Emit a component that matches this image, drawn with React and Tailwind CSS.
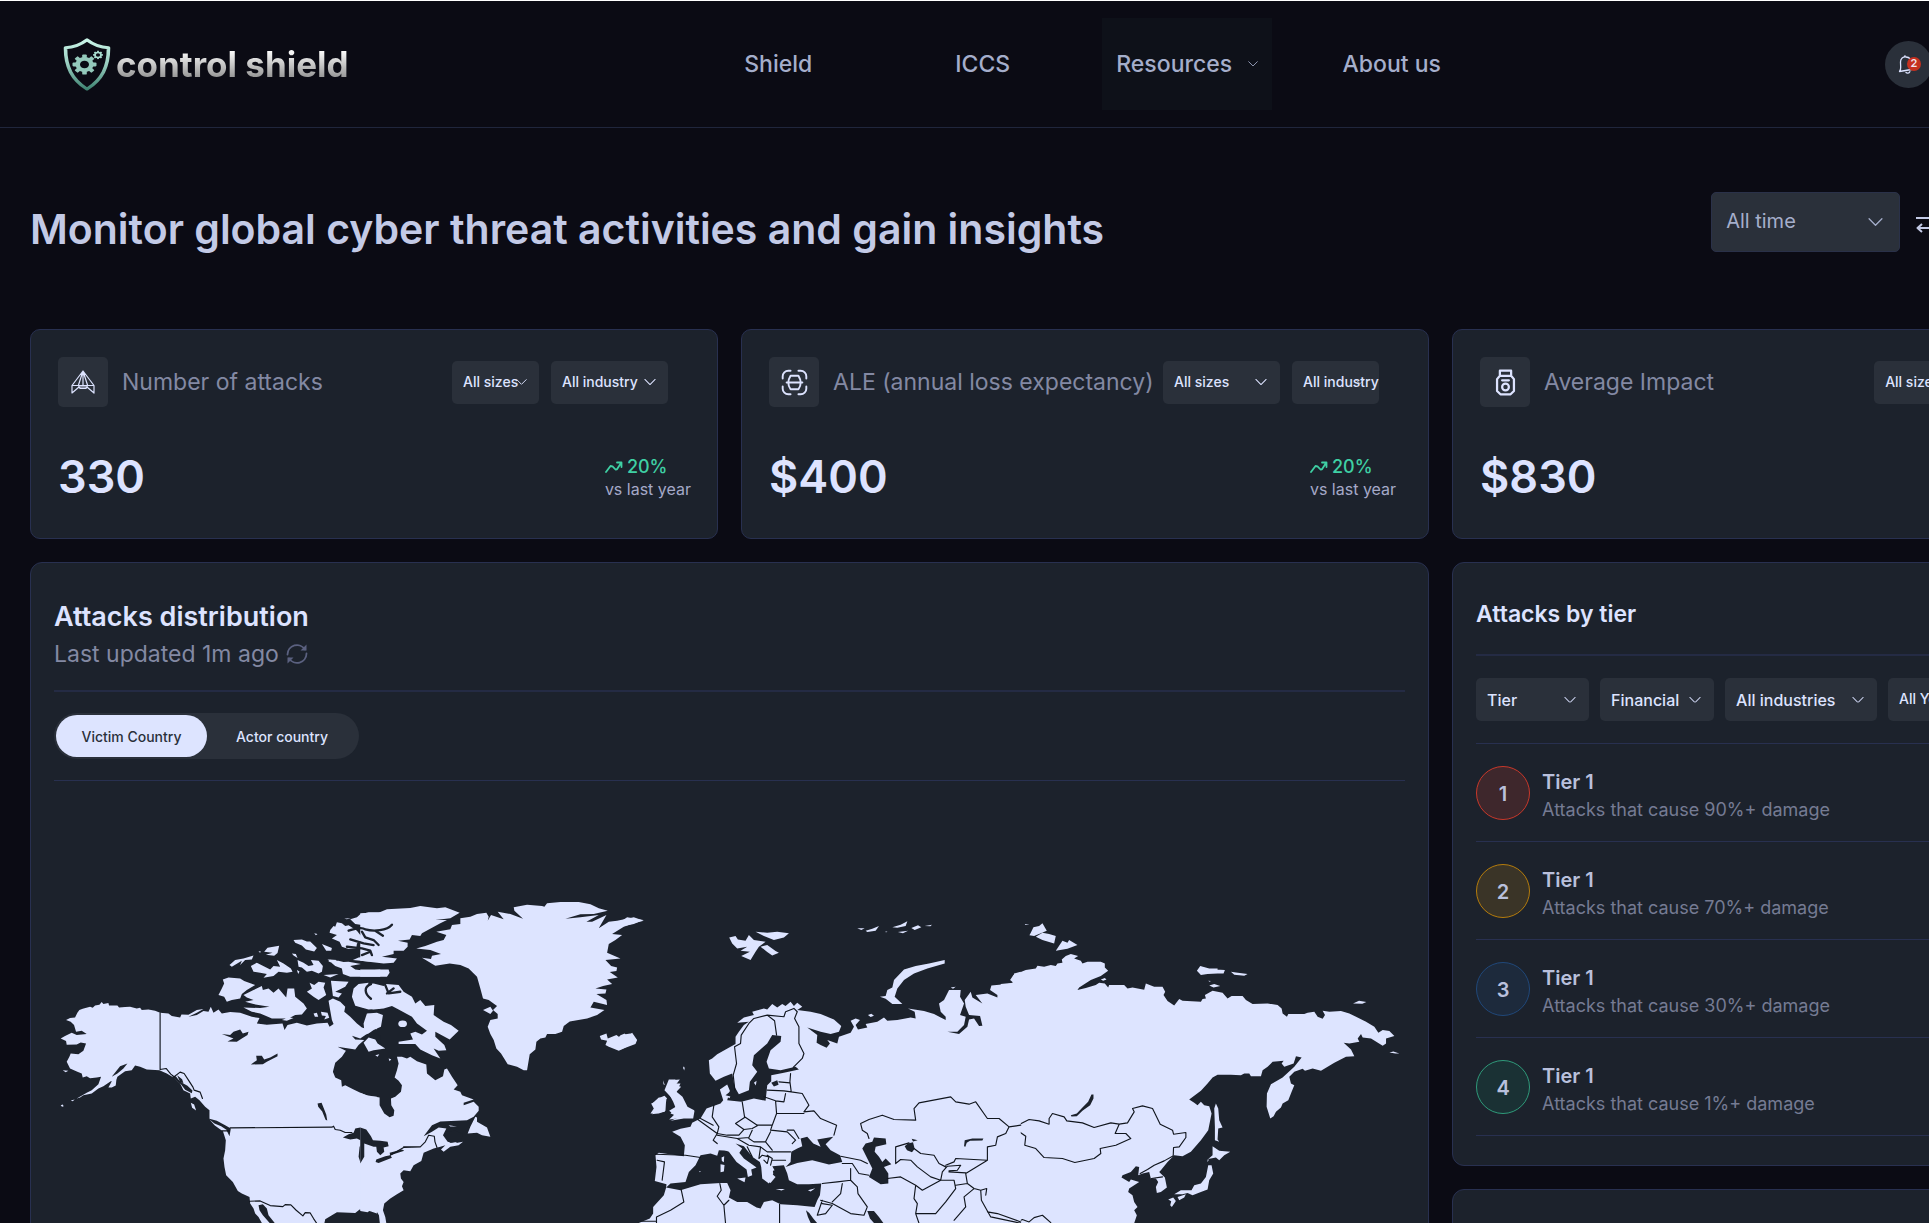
import React from "react";

const Chevron = ({ className }) => (
  <svg viewBox="0 0 14 8" fill="none" stroke="currentColor" strokeWidth="1.2" className={className} aria-hidden="true">
    <path d="M1 1l6 6 6-6" strokeLinecap="round" strokeLinejoin="round" />
  </svg>
);

function Dropdown({ label, options, className = "", selectClass = "", chevronClass = "right-[11px] w-3" }) {
  return (
    <div className={`relative shrink-0 ${className}`}>
      <select
        aria-label={label}
        className={`block w-full appearance-none whitespace-nowrap rounded-[5px] bg-[#2a303a] outline-none ${selectClass}`}
      >
        {options.map((o) => (
          <option key={o}>{o}</option>
        ))}
      </select>
      <Chevron className={`pointer-events-none absolute top-1/2 -translate-y-1/2 ${chevronClass}`} />
    </div>
  );
}

const gearTeeth = [0, 45, 90, 135, 180, 225, 270, 315];

function Logo() {
  return (
    <a href="#home" className="flex items-center gap-1" aria-label="control shield">
      <svg viewBox="0 0 50 66" className="h-[55px] w-[50px]" preserveAspectRatio="none" aria-hidden="true">
        <defs>
          <linearGradient id="mint" x1="0" y1="0" x2="0" y2="1">
            <stop offset="0" stopColor="#c9f5e8" />
            <stop offset="0.5" stopColor="#98cdbf" />
            <stop offset="1" stopColor="#3f8472" />
          </linearGradient>
        </defs>
        <path
          d="M25 3.5C19 9 11 12.500 3.500 13C3.500 36 10 51 25 62.500C40 51 46.500 36 46.500 13C39 12.500 31 9 25 3.500Z"
          fill="none" stroke="url(#mint)" strokeWidth="3.600" strokeLinejoin="round"
        />
        <g transform="translate(22.500 33)">
          {gearTeeth.map((a) => (
            <rect key={a} x="-2.300" y="-12" width="4.600" height="5" rx="1" fill="#94c9bb" transform={`rotate(${a})`} />
          ))}
          <circle r="6.800" fill="none" stroke="#94c9bb" strokeWidth="4.600" />
        </g>
        <g transform="translate(36 21.500)">
          {gearTeeth.map((a) => (
            <rect key={a} x="-0.900" y="-5" width="1.800" height="2" fill="#a9dccf" transform={`rotate(${a})`} />
          ))}
          <circle r="3" fill="none" stroke="#a9dccf" strokeWidth="1.800" />
        </g>
      </svg>
      <span className="bg-gradient-to-b from-white from-20% to-[#8d8d8d] to-85% bg-clip-text text-[35px] leading-[46px] font-bold text-transparent">
        control shield
      </span>
    </a>
  );
}

function Header() {
  return (
    <header className="grid h-[128px] shrink-0 grid-cols-[614px_818px_auto] items-center border-t border-b border-t-white border-b-[#20263c] pl-[62px] text-[23px] text-[#a5aecb]">
      <Logo />
      <nav className="grid grid-cols-4 items-center justify-items-center font-medium">
        <a href="#shield">Shield</a>
        <a href="#iccs">ICCS</a>
        <button type="button" className="flex h-[92px] w-[170px] items-center justify-between bg-[#0e1119] px-[14px]">
          Resources
          <Chevron className="w-[10px]" />
        </button>
        <a href="#about">About us</a>
      </nav>
      <button
        type="button"
        aria-label="Notifications"
        className="relative ml-[391px] flex size-[47px] items-center justify-center rounded-full bg-[#2a303a]"
      >
        <svg viewBox="0 0 20 20" className="mr-1 size-5" fill="none" stroke="#dde3ff" strokeWidth="1.300" strokeLinecap="round" strokeLinejoin="round">
          <path d="M2.500 17.500c1-1 1.300-2 1.200-4.500L3.500 8C3.500 4.500 6 2.700 9 3c3.500.3 5.500 2.500 6 6l.5 3.500 2 2.500zM7.500 2.800L8 1.800M9 18.500c1 1 3 .8 3.800-.8" />
        </svg>
        <span className="absolute top-4 left-[22px] flex size-[14px] items-center justify-center rounded-full bg-[#c5301f] text-[11px] leading-none font-semibold text-[#f0e4ee]">
          2
        </span>
      </button>
    </header>
  );
}

const iconProps = { viewBox: "0 0 24 24", fill: "none", stroke: "#dde3ff", strokeLinejoin: "round", strokeLinecap: "round" };

const PlaneIcon = () => (
  <svg {...iconProps} strokeWidth="1.200" className="size-6">
    <path d="M12 1L1 15.500V23L8 17h8l7 6V15.500L12 1zM12 1v14.500M12 1L7.500 15M12 1l4.500 14M1 15.500h22M7.500 15.500L9 18.500h6l1.500-3" />
  </svg>
);
const ScanIcon = () => (
  <svg {...iconProps} strokeWidth="1.700" className="size-[27px]">
    <path d="M1.500 8.500V6.500a5 5 0 015-5h2M15.500 1.500h2a5 5 0 015 5v2M22.500 15.500v2a5 5 0 01-5 5h-2M8.500 22.500h-2a5 5 0 01-5-5v-2M8.500 6h7c1.500 2.500 2 4 2 6s-.5 4-2 6h-7c-1.500-2-2-4-2-6s.5-3.500 2-6zM5 12h14" />
  </svg>
);
const JarIcon = () => (
  <svg {...iconProps} strokeWidth="2" className="size-[27px]">
    <path d="M7 1.500h10V6H7zM7 6L4.500 9v10.500L7.500 22.500h9l3-3V9L17 6M9 10h6" />
    <circle cx="12" cy="16" r="3" />
  </svg>
);

const stats = [
  { title: "Number of attacks", value: "330", Icon: PlaneIcon, sizes: "w-[87px]", industry: "w-[117px]", chevS: "right-[12px] w-[11px]", chevI: "right-[12px] w-3", trend: "pr-[26px]", change: "20%" },
  { title: "ALE (annual loss expectancy)", value: "$400", Icon: ScanIcon, sizes: "w-[117px]", industry: "w-[87px]", chevS: "right-[13px] w-3", chevI: "right-[15px] w-2", trend: "pr-8", change: "20%" },
  { title: "Average Impact", value: "$830", Icon: JarIcon, sizes: "w-[87px]", industry: "w-[117px]", chevS: "right-[12px] w-[11px]", chevI: "right-[12px] w-3", trend: "pr-8" },
];

const smallSelect = "h-[43px] pl-[11px] pb-[2px] text-[14px] font-medium text-[#dde3ff]";

function StatCard({ title, value, Icon, sizes, industry, chevS, chevI, trend, change }) {
  return (
    <section className="h-[210px] rounded-[10px] border border-[#283050] bg-[#1c222c] pt-[27px] pl-[27px]">
      <div className="flex items-center pr-[49px]">
        <span className="flex size-[50px] shrink-0 items-center justify-center rounded-[5px] bg-[#2a303a]">
          <Icon />
        </span>
        <h2 className="ml-[14px] text-[23px] whitespace-nowrap text-[#8389a3]">{title}</h2>
        <div className="ml-auto flex gap-3 text-[#dde3ff]">
          <Dropdown label={`${title} by size`} options={["All sizes", "Small", "Large"]} className={sizes} selectClass={smallSelect} chevronClass={chevS} />
          <Dropdown label={`${title} by industry`} options={["All industry", "Finance", "Health"]} className={industry} selectClass={smallSelect} chevronClass={chevI} />
        </div>
      </div>
      <div className={`mt-[42px] flex items-center justify-between ${trend}`}>
        <p className="text-[45px] leading-[56px] font-semibold text-[#dde3ff]">{value}</p>
        {change && (
          <div className="pt-px">
            <p className="flex items-center gap-1 text-[18px] leading-[22px] font-medium text-[#3fd0a4]">
              <svg viewBox="0 0 18 14" className="h-[14px] w-[18px]" fill="none" stroke="currentColor" strokeWidth="1.800" strokeLinecap="round" strokeLinejoin="round" aria-hidden="true">
                <path d="M1 12l4.500-6 2 .3 3 3.200 1.500-.2L16 3M12 2.500h4.500V7" />
              </svg>
              {change}
            </p>
            <p className="text-[16px] leading-[22px] text-[#a5a9c8]">vs last year</p>
          </div>
        )}
      </div>
    </section>
  );
}

/* Land, water and border outlines, one set per tile of the map. */
const westLand =
  "M78 420L90 414 105 412 112 398 118 390 128 386 150 380 158 383 165 376 178 374 185 366 190 372 205 369 207 376 232 376 237 382 255 381 270 380 290 385 300 383 305 390 325 388 345 392 360 398 385 400 395 408 420 412 424 403 445 404 470 390 490 387 470 398 445 410 470 405 490 393 505 395 512 380 520 398 535 388 545 400 570 396 600 398 635 410 658 414 650 430 680 434 727 430 733 450 742 435 770 428 800 436 830 430 862 428 868 440 880 432 875 420 868 380 865 362 878 355 900 365 915 380 912 395 930 410 950 430 965 442 985 448 975 465 960 475 935 467 945 478 972 480 955 495 945 508 892 500 917 512 905 530 885 548 878 575 885 592 903 600 905 620 915 615 940 628 965 640 985 648 1010 650L1010 1000 990 993 975 990 958 988 945 998 910 997 890 996 875 1005 855 1017 850 1040 690 1050 665 1028 655 1010 645 1000 640 985 630 970 628 950 605 940 593 932 578 905 558 885 553 860 550 835 555 810 557 780 548 752 560 752 568 768 572 745 555 735 530 722 508 716 508 690 495 680 478 660 465 650 452 655 450 640 430 630 420 610 400 592 380 580 358 570 320 568 300 560 285 556 275 570 255 573 232 590 228 602 212 603 190 618 175 625 155 640 130 645 120 652 110 655 140 638 155 630 175 612 183 590 170 592 150 594 140 588 128 592 125 580 112 575 90 565 80 545 88 530 92 520 115 522 130 512 138 490 122 487 110 493 80 494 78 483 62 475 75 468 95 458 110 465 140 462 125 452 108 455 102 435 92 425Z";
const westIslands =
  "M68 570l17 2-8 4zM205 622l12-22 12-2-2 18-12 6zM62 675l6-2 3 5-5 2zM92 661l12-3-6 5zM452 668l10 5 6 18-12-8zM508 718l15 12 20 8 18 12-12 4-25-18zM870 150L880 138 885 140 890 127 905 130 915 138 925 136 950 152 960 165 975 178 965 180 950 190 948 205 925 207 905 200 898 185 875 175 890 165 868 158ZM930 118L950 112 960 103 985 97 1020 97 1020 148 985 145 965 135 945 132ZM912 116l20-2-12 4zM972 155L1000 160 1020 180 1020 242 985 244 938 240 955 232 990 228 985 218 965 210 1005 198 980 185ZM862 238L885 240 910 246 925 245 962 252 930 258 945 268 975 272 1020 268 1020 290 930 290 908 282 905 265 885 258ZM548 298L565 292 600 295 612 303 645 315 620 330 605 342 600 355 575 360 560 365 552 350 535 345 545 325 552 310ZM610 345L640 330 665 318 668 330 685 325 700 338 715 325 738 352 742 325 762 325 765 350 790 370 800 385 785 403 765 405 745 415 695 415 660 400 635 395 610 382 660 384 688 380 655 375 640 372 615 365 640 360 620 352ZM568 255L585 240 610 235 640 226 635 238 615 240 600 255 605 242 575 260ZM632 258L650 248 690 268 700 258 720 260 710 240 730 250 752 265 757 275 740 278 715 275 700 288 670 293 680 282 660 278 640 275ZM672 215l10-12 35-6-5 22-10 8-25-3 20-6zM760 180l25-2 15 6 10 0 20 20-8 10-25-6-12-12-20-8zM845 192l30 12-2 8-15 0zM822 160l10 2-5 4zM655 213l8 2-4 3zM755 220l12 2 5 12-12-8zM772 240L790 248 805 258 820 255 812 240 835 242 848 258 845 275 835 280 815 272 800 275 785 262 775 260ZM770 270l8 4-4 8zM868 238l22 2-15 8-10-4zM808 308L822 315 835 305 855 308 850 322 858 345 835 360 820 350 800 335 815 325ZM872 302L925 305 915 320 885 335 905 340 895 352 878 348ZM935 350L940 325 955 312 985 308 978 325 980 345 990 355 1020 362 1020 385 985 388 945 377ZM842 395l20 3 5 15-15 5 5-10-12-2zM878 395l12 4 2 18-8 4zM725 420l20-8 15 2-20 8zM850 285l45-3-25 10zM820 400l10-2 4 12-10 0zM985 400l20 10 15-5 0 15-15 8 5 20-20-15z";
const westWater =
  "M545 462L570 465 580 455 600 448 608 460 625 455 622 465 605 475 590 485 562 484 580 475zM632 553L650 540 648 527 665 527 672 538 690 532 712 520 712 528 680 545 668 552zM832 670l12-2 6 15 8 20 3 18-5-2-10-25-12-14zM908 772L925 762 940 758 945 745 960 742 975 745 985 755 990 775 1020 785 1020 800 1005 792 985 795 972 800 972 838 960 845 955 830 958 800 970 785 950 775 930 778zM655 975L668 972 680 985 685 1005 705 1030 690 1030 668 1005 658 990zM395 590l12-2 12 15-8-18 15 12 4 12-10-4 22 12 15 14-2 8-20-10-12-16zM215 590L240 558 262 550 250 565 232 580zM985 448l35 20 0 25-18-15-12-8-15-12zM1005 830l15-10 0 30-14-4z";
const westBorders =
  "M360 398V568M360 568L378 565 392 582 402 590 420 576 432 580 445 600 458 620 462 630 480 636 487 655M570 743L875 741 880 738 885 748 900 750 915 757 935 757M545 752H568M628 963L660 962 690 976 728 979 735 973 752 974 768 990 788 1007 795 997 810 998 820 1015 830 1030";

const atlanticLand =
  "M0 638L20 645 58 652 58 675 72 700 88 711 100 707 102 690 93 675 92 655 105 650 122 635 125 615 115 602 103 592 110 570 115 550 110 530 125 530 140 535 150 530 170 543 198 553 200 580 225 600 248 588 252 568 260 565 275 590 292 615 280 628 300 635 305 645 340 658 310 668 310 675 340 665 355 680 355 692 340 710 320 720 240 724 215 735 190 768 215 755 235 742 258 745 248 765 262 785 280 790 308 785 295 795 270 800 250 815 242 808 255 795 240 800 220 805 190 818 183 842 160 855 150 873 130 870 120 880 122 895 130 905 125 918 130 930 110 942 90 955 72 970 68 990 75 1010 80 1040 60 1040 56 1005 50 995 30 990 22 996 0 992Z";
const greenland =
  "M168 205L195 198 230 185 250 180 258 165 228 155 270 148 275 135 300 132 300 115 330 110 350 102 378 98 385 110 382 122 392 105 430 118 412 95 450 102 488 116 462 92 460 82 500 74 545 78 552 80 560 70 600 66 655 66 690 73 715 85 742 92 700 102 660 103 615 116 660 112 715 105 678 125 695 125 738 105 715 145 745 125 770 122 820 112 850 122 820 130 790 140 755 162 785 165 765 180 745 192 740 218 780 235 735 240 752 258 770 262 768 273 748 276 772 292 740 298 755 312 728 318 705 325 738 328 735 340 708 342 738 360 740 375 700 365 690 382 732 390 710 405 680 415 628 424 610 438 605 455 585 462 560 462 555 472 540 475 528 485 525 508 508 522 500 570 490 570 470 560 442 552 422 520 408 505 400 480 390 462 382 440 390 420 412 415 412 402 398 390 410 378 385 360 368 355 360 325 350 290 325 265 300 255 268 250 225 257 205 245 185 233 212 237 215 227 242 222 210 210Z";
const atlanticIslands =
  "M0 100L30 98 55 98 80 88 150 84 180 78 230 85 255 82 298 98 270 115 225 120 260 120 240 130 185 160 180 168 155 165 148 178 113 182 142 188 142 200 130 212 100 212 100 222 65 230 110 235 100 248 70 250 0 242ZM0 268L85 268 88 278 80 290 0 290ZM0 315L40 310 70 318 78 312 115 315 130 335 155 350 165 370 180 360 195 378 222 375 220 405 250 425 272 435 295 452 268 478 225 455 225 470 252 495 258 510 235 512 220 505 240 535 215 525 180 508 165 492 115 492 115 485 158 478 150 460 165 455 185 463 200 452 170 430 155 410 115 388 95 378 70 385 40 388 0 380ZM20 400L50 398 68 405 62 440 40 450 25 460 0 470 12 450 10 430ZM10 488L25 472 45 478 52 490 75 505 40 510 25 515ZM45 525l12-3-5 8zM85 535l8 2-5 6zM368 390L390 380 398 392 390 402ZM322 760L330 740 345 710 350 712 350 725 380 742 390 770 365 765 350 758ZM265 735l25 4-20 0zM265 790l30-8-15 12zM718 468L738 460 742 475 768 465 775 470 792 460 800 468 815 458 830 480 825 492 795 503 775 512 745 500 735 495 740 482 722 478ZM870 700L880 685 872 670 895 662 915 668 915 692 895 700ZM925 598l20 0-5 12 20 0-12 25 18 15 15 30 20 10-5 20-70 8 15-14-15-12 20-12-5-20-15-15-14-15zM892 655l20-8 8 8-12 8zM908 600l5 15-4-3zM968 562l5 0-2 9z";
const atlanticWater =
  "M0 742L18 748 32 768 38 780 60 782 82 785 85 798 70 802 72 815 60 825 50 815 48 800 40 800 12 790 12 830 0 850zM48 838L75 828 90 825 95 833 55 848 46 845zM88 818L125 808 132 812 90 825zM255 755L285 752 308 762 300 785 270 788 258 775z";
const atlanticInlets =
  "M-35 152C-15 145 5 140 15 148C40 155 80 152 95 134M45 152L68 167M5 155L15 172 40 180 55 195M-30 178L10 190 40 195M-40 200L5 205 30 212 35 225M5 225L30 215M32 312C10 320 12 340 32 356M75 315L85 340 120 335M80 340L100 325";
const atlanticBorders = "M130 800L180 800 195 785 205 765 222 768 224 785 230 802M90 825L130 802 180 800";

const euroLand =
  "M265 480L275 475 290 462 330 440 345 432 345 410 355 395 370 375 385 365 350 368 370 352 400 345 395 335 430 325 440 328 455 312 470 322 485 312 495 318 510 305 520 318 530 308 545 320 530 330 570 335 600 342 640 358 662 378 655 395 630 402 600 395 560 382 590 405 588 428 600 435 618 443 628 430 620 420 650 430 655 410 690 398 700 380 690 362 705 355 718 360 705 375 712 388 740 382 735 372 770 365 790 352 800 362 830 360 870 352 885 355 882 335 862 325 910 333 940 342 975 360 975 350 960 335 955 310 970 300 985 270 1020 270 1018 290 1030 310 1018 345 1035 350 1030 375 1010 395 980 395 1015 402 1040 380 1045 358 1060 355 1075 378 1085 377 1078 348 1045 345 1035 320 1032 300 1050 275 1055 292 1085 310 1065 285 1100 280 1130 292 1130 285 1108 270 1112 256 1175 250 1180 220 1200 215V1010H55V968L88 955 98 940 98 920 130 885 137 862 138 852 103 842 108 800 105 765 115 758 190 768 193 735 180 710 155 695 180 686 210 680 215 668 240 655 258 625 300 610 308 600 298 568 320 553 328 572 320 600 362 605 400 595 435 602 438 575 440 555 452 543 452 525 490 518 535 508 525 500 480 510 445 505 438 485 450 450 480 425 482 408 455 405 440 430 400 465 395 495 410 515 388 545 385 570 355 582 342 560 335 520 310 530 285 542 268 520Z";
const euroIslands =
  "M150 540L178 538 165 555 182 560 165 578 175 585 190 612 205 628 222 632 218 655 190 655 150 662 178 650 150 640 165 622 158 605 150 590 140 570ZM95 610L115 592 138 595 133 635 95 642 105 628ZM326 112L345 108 352 118 375 122 385 105 400 120 435 125 415 140 405 155 390 180 362 168 388 155 360 152 380 140 350 145 335 130ZM405 95L440 98 470 95 505 100 490 112 460 120 430 108ZM420 140l20-5 25 18 10 5-20 8-15-10zM710 85l22 0-10 5zM735 92l20-6 20-8-10 14-25 4zM795 94l6 2-6 1zM815 82l25-8 20-10-5 14-25 5zM832 96l30-4-15 8zM872 84l20-8 10 6-20 8zM912 78l22-4-5 5zM778 290L795 288 800 270 815 262 820 240 850 208 885 198 925 190 972 180 972 190 920 205 880 220 850 240 830 265 822 290 845 312 815 312 795 296ZM742 345l10-4 8 6-10 4zM990 262l15-2-8 6zM0 65L20 52 68 60 40 72 0 80ZM0 405L30 400 48 420 20 440 0 448ZM400 548l8-6-2 14zM320 580l12 2-5 12-8-4zM188 500l3 0-1 8z";
const euroWater =
  "M137 862L150 850 195 845 205 815 225 795 240 765 270 760 290 767 295 750 325 752 345 775 365 745 345 730 370 738 395 770 418 785 422 800 425 835 445 850 458 820 455 798 490 795 500 820 505 840 530 852 565 852 602 850 598 885 590 900 582 920 530 915 480 912 455 900 430 905 420 925 408 922 380 905 350 905 325 892 330 870 320 848 300 848 240 852 180 870zM510 785L512 755 530 745 545 738 540 715 560 710 578 730 600 740 590 718 638 710 615 732 630 750 658 765 665 785 625 793 575 780 530 788 495 800zM725 745L735 730 755 725 760 712 795 715 797 732 765 740 762 755 775 770 785 785 795 775 812 792 790 800 803 820 803 850 780 852 745 830 755 805 740 775zM852 738l10-8 15-4 5 20-8 10-15-6zM873 716l18 4-14 4zM1030 738L1032 720 1055 715 1088 715 1085 721 1048 722 1038 728 1034 740zM740 932L760 932 775 950 800 985 775 985 748 955zM556 930L566 938 578 955 590 969 600 990 580 990 562 950zM452 548l18-8 4 14-14 5zM345 593l-30-8 15-12z";
const euroPeninsulas =
  "M285 735L340 730 350 750 370 775 408 802 392 808 395 825 382 830 378 808 348 785 325 755 300 745ZM350 835L375 832 372 846ZM300 792l12 2-2 20-10 2zM303 772l8-4-1 18-6-4zM430 800L455 798 462 810 448 815 465 830 450 848 435 840ZM465 866l28 0-10 5zM562 870l22-6-14 10zM236 812l5 1-3 3z";
const euroBorders =
  "M343 570L338 525 348 490 342 440 360 430 362 405 385 370 400 355 440 345 490 350 495 335 520 325 530 335 522 355 535 380 535 430 550 460 545 475 518 502M440 345L462 362 468 405M510 520L508 545 512 575 545 580 565 615 550 635 580 632 600 655 648 675 640 705M475 545L508 548M440 570L490 572 512 575M430 590L465 602 490 605 495 580M365 605L372 650 410 675 455 675 468 640 465 602M468 640L510 640 550 640M280 615L275 650 295 680 290 700 320 705 355 705 370 688 345 670 372 652M240 655L278 675M232 658L290 700 278 720 290 730M455 675L450 690 500 695 525 720 515 730M500 690L520 690 535 715M410 677L395 685 370 688M395 690L385 712 350 715 290 705M385 715L400 725 435 725 450 695M350 715L385 735 420 740 440 755 510 755M435 725L455 750M420 740L415 775 425 765 445 770 440 790 430 780M380 740L395 770M455 780L495 780M450 795L455 775 440 765M105 762L195 765 240 772M110 780L132 785 125 840M182 868L190 905 150 930 108 950V969M60 963H108M298 850L302 870 290 888 310 915 315 969M310 915L325 900M477 912V969M660 768L720 780 740 790M665 790L695 790 715 820 745 825M690 805L690 840 650 845 605 850M690 840L710 860 712 880 740 920 730 945 690 940 635 910 600 900M665 850L660 880 635 905M605 900L590 945 615 940 635 915 605 910M800 835L840 830 885 855 905 870 960 840 1000 840 1005 865 975 905 945 940 885 940 890 910 880 895 885 855M825 790V740L865 728M825 790L840 778 870 780 890 800 930 830 960 840M880 745L900 760 940 765 955 790 975 800M960 840L965 815 980 798 1020 795 1010 810 985 812M975 795L1000 785 1005 775 1100 780 1035 820 1040 850 1005 855M985 815L1035 818M745 715L740 700 725 690 720 670 745 658 785 645 820 658 885 660 880 625 895 608 990 590 1005 605 1045 612 1065 605 1100 655 1135 655 1165 680 1155 700 1130 710 1125 735 1100 740 1100 780M1165 680L1200 675M1040 850L1060 865 1080 870 1082 900 1110 950 1200 969M1060 865L1030 890 1035 920 1000 960M1080 870L1098 865 1095 885M885 940L895 969M1100 935L1130 940 1200 965";

const eastLand =
  "M0 252L38 248 28 240 38 225 75 210 105 205 110 197 130 200 150 195 165 198 170 190 185 188 183 178 195 168 210 162 232 168 220 175 240 182 245 190 260 185 300 185 312 190 312 202 322 212 300 228 270 240 235 262 230 270 255 264 285 255 295 248 312 250 322 262 325 255 370 255 380 265 395 262 430 269 435 250 460 260 485 260 493 275 488 285 500 303 520 316 535 297 545 302 600 305 605 297 615 295 612 285 635 272 665 278 680 295 692 288 725 288 735 300 755 312 800 310 830 315 842 325 845 340 858 350 862 342 910 342 920 338 940 335 950 350 965 356 972 345 965 332 985 335 1020 333 1045 340 1065 350 1095 365 1120 380 1132 398 1145 390 1165 393 1180 408 1155 415 1155 430 1145 437 1110 415 1085 412 1080 402 1070 415 1075 425 1045 430 1028 428 1050 448 1060 468 1035 470 1000 488 960 512 935 505 912 512 905 506 880 515 865 530 870 550 880 555 872 575 862 600 845 610 840 622 825 635 818 648 808 655 797 620 798 580 810 552 845 532 880 500 902 472 885 468 878 490 850 500 842 490 848 482 815 485 800 500 785 510 780 528 750 528 745 520 730 520 720 525 690 524 650 524 635 532 620 550 600 572 565 598 580 608 590 615 600 605 610 615 625 618 632 640 622 690 600 720 570 755 545 768 520 765 500 785 480 810 475 815 492 832 498 862 480 875 468 878 465 860 472 845 465 835 450 835 445 815 425 820 412 825 415 800 405 798 390 815 365 825 362 832 385 845 390 838 415 845 385 865 382 875 395 885 400 905 410 920 400 930 408 945 400 969 395 1010H0Z";
const eastIslands =
  "M72 72l14 2-12 1zM90 98L98 82 115 78 125 70 138 92 120 100 100 108 86 106ZM105 110L125 98 145 102 165 108 160 130 125 120ZM165 152L185 122 200 128 205 120 230 135 200 146ZM300 238l12-4 5 4-10 4zM588 212L598 198 625 205 650 205 650 215 640 215 645 208 672 210 668 220 650 220 620 222 600 225ZM690 215l15 2 35 5-10 5-30-3zM622 242l8 1-4 2zM625 256l15-4 18 6-20 4zM1056 310l18-8 22 4-12 5zM1165 457l12-3 18 6-12 0zM640 625L645 610 652 625 655 660 665 682 652 685 650 718 655 725 642 720 642 680ZM635 738L655 752 688 755 670 765 655 780 645 772 622 776 635 765ZM620 778l4 0-4 8zM622 795L632 795 637 820 625 840 620 868 600 875 575 885 560 878 545 882 520 882 540 870 572 870 580 855 600 850 615 830ZM530 890l25-8-5 10-15 8zM502 898l15-6 8 10-12 18-5-5 3-12z";
const eastWater = "M210 645L228 640 245 622 262 605 272 583 278 583 278 595 268 615 245 632 228 648 212 649z";
const eastBorders =
  "M0 655L15 672 37 682 20 690 18 712 0 712M37 682L85 658 115 662 145 672 145 655 155 640 190 650 198 662 245 668 280 682 330 668 355 672 380 668 400 635 395 625 425 617 455 625 478 672 515 690 518 702 555 697 555 712 535 740 518 742 517 768M37 682L75 708 72 735 105 745 130 772 185 775 222 787 280 775 300 760 298 745 345 735 390 715 375 700 343 700 355 672M515 768L490 782 460 795 440 808 418 820M452 835L485 830M0 950L50 965 65 958 85 965 100 952 125 945 150 967";

const mapTiles = [
  { x: 40, y: 880, land: westLand + westIslands, water: westWater, borders: westBorders },
  { x: 360, y: 880, land: atlanticLand + greenland + atlanticIslands, water: atlanticWater, inlets: atlanticInlets, extra: "M114 431a13 10 0 1 0 26 0a13 10 0 1 0-26 0z", borders: atlanticBorders },
  { x: 1000, y: 900, land: eastLand + eastIslands, water: eastWater, borders: eastBorders },
  { x: 620, y: 900, land: euroLand + euroIslands, water: euroWater, extra: euroPeninsulas, borders: euroBorders },
];

function WorldMap() {
  return (
    <svg viewBox="54 880 1350 350" className="mt-[99px] block w-full" role="img" aria-label="World map of attacks">
      {mapTiles.map((t) => (
        <g key={t.x} transform={`translate(${t.x} ${t.y}) scale(0.33333)`} fill="none" strokeLinejoin="round" strokeLinecap="round">
          <path d={t.land} fill="#dde4ff" />
          <path d={t.water} fill="#1c222c" />
          {t.inlets && <path d={t.inlets} stroke="#1c222c" strokeWidth="7" />}
          {t.extra && <path d={t.extra} fill="#dde4ff" />}
          <path d={t.borders} stroke="#10151d" strokeWidth="3.400" />
        </g>
      ))}
    </svg>
  );
}

function Distribution() {
  return (
    <section className="col-span-2 rounded-[12px] border border-[#283050] bg-[#1c222c] px-[23px] pt-[36px] pb-[120px]">
      <h2 className="text-[27px] leading-9 font-semibold text-[#dde3ff]">Attacks distribution</h2>
      <div className="flex items-center gap-[7px] pt-px text-[23px] leading-9 text-[#8389a3]">
        Last updated 1m ago
        <button type="button" aria-label="Refresh" className="text-[#5b6180]">
          <svg viewBox="0 0 22 22" className="size-[22px]" fill="none" stroke="currentColor" strokeWidth="1.800">
            <path d="M1.500 11.500A9.500 9.500 0 0 1 19 6.500M20.500 10.500A9.500 9.500 0 0 1 3 15.500" strokeLinecap="round" />
            <path d="M20.500 1.500V7.500H14.500zM1.500 20.500V14.500H7.500z" fill="currentColor" stroke="none" />
          </svg>
        </button>
      </div>
      <div className="mt-[18px] border-t-2 border-b border-t-[#242b44] border-b-[#283050] py-[21px]">
        <div className="inline-flex rounded-full bg-[#2a303a] p-[2px] align-top text-[14px] font-medium">
          <button type="button" aria-pressed="true" className="h-[42px] w-[151px] rounded-full bg-[#dde4ff] text-[#2a303a]">
            Victim Country
          </button>
          <button type="button" aria-pressed="false" className="h-[42px] w-[150px] rounded-full text-[#dde3ff]">
            Actor country
          </button>
        </div>
      </div>
      <WorldMap />
    </section>
  );
}

const tiers = [
  { n: 1, pct: "90%+", tone: "border-[#c8382a] bg-[#3e272c]" },
  { n: 2, pct: "70%+", tone: "border-[#b57c0c] bg-[#3a3427]" },
  { n: 3, pct: "30%+", tone: "border-[#20487a] bg-[#1d2a3c]" },
  { n: 4, pct: "1%+", tone: "border-[#2f9a7a] bg-[#1a3134]" },
];

const tierSelect = "h-[43px] pl-[11px] text-[16px] font-medium text-[#dde3ff]";

function Tiers() {
  return (
    <section className="h-[604px] rounded-[12px] border border-[#283050] bg-[#1c222c] px-[23px] pt-[33px]">
      <h2 className="text-[23px] leading-9 font-semibold text-[#dde3ff]">Attacks by tier</h2>
      <div className="mt-[22px] flex gap-[11px] border-t-2 border-b border-t-[#242b44] border-b-[#283050] pt-[22px] pb-[22px] text-[#c3cae6]">
        <Dropdown label="Tier" options={["Tier", "1", "2"]} className="w-[113px]" selectClass={tierSelect} chevronClass="right-[13px] w-3" />
        <Dropdown label="Impact type" options={["Financial", "Data"]} className="w-[114px]" selectClass={tierSelect} chevronClass="right-[13px] w-3" />
        <Dropdown label="Industry" options={["All industries", "Health"]} className="w-[152px]" selectClass={tierSelect} chevronClass="right-[13px] w-3" />
        <Dropdown label="Year" options={["All Years", "2023"]} className="w-[117px]" selectClass={smallSelect} />
      </div>
      <ul>
        {tiers.map((t) => (
          <li key={t.n} className="flex h-[98px] items-center gap-3 border-b border-[#283050]">
            <span className={`flex size-[54px] shrink-0 items-center justify-center rounded-full border pt-[2px] text-[20px] font-semibold text-[#b9c0dc] ${t.tone}`}>
              {t.n}
            </span>
            <div className="pt-[7px]">
              <h3 className="text-[20px] leading-[27px] font-semibold text-[#b9c0dc]">Tier 1</h3>
              <p className="text-[18px] leading-[27px] text-[#757b93]">Attacks that cause {t.pct} damage</p>
            </div>
          </li>
        ))}
      </ul>
    </section>
  );
}

export default function App() {
  return (
    <div className="h-screen overflow-hidden bg-[#0b0b14] font-['Inter',sans-serif]">
      <div className="w-[112.5%]">
        <Header />
        <main className="px-[30px]">
          <div className="flex items-start justify-between pt-16 pr-[198px]">
            <h1 className="mt-[7px] text-[41px] leading-[60px] font-semibold text-[#c3cae6]">
              Monitor global cyber threat activities and gain insights
            </h1>
            <div className="flex items-center gap-4 text-[#a5aecb]">
              <Dropdown
                label="Time range"
                options={["All time", "This year", "This month"]}
                className="w-[189px]"
                selectClass="h-[60px] border border-[#2a3149] pl-[14px] pb-[3px] text-[20px] text-[#a5aecb]"
                chevronClass="right-[17px] w-[15px]"
              />
              <button type="button" aria-label="Swap order" className="pt-1">
                <svg viewBox="0 0 26 20" className="h-5 w-[26px]" fill="none" stroke="#c3cae6" strokeWidth="2" strokeLinejoin="round">
                  <path d="M0 4h24M20 0l4 4-4 4M26 14H1M6 10l-4.500 4L6 18" />
                </svg>
              </button>
            </div>
          </div>
          <div className="mt-[70px] grid grid-cols-3 gap-[23px]">
            {stats.map((s) => (
              <StatCard key={s.title} {...s} />
            ))}
            <Distribution />
            <div className="flex flex-col gap-[23px]">
              <Tiers />
              <section className="flex-1 rounded-[12px] border border-[#283050] bg-[#1c222c]" />
            </div>
          </div>
        </main>
      </div>
    </div>
  );
}
